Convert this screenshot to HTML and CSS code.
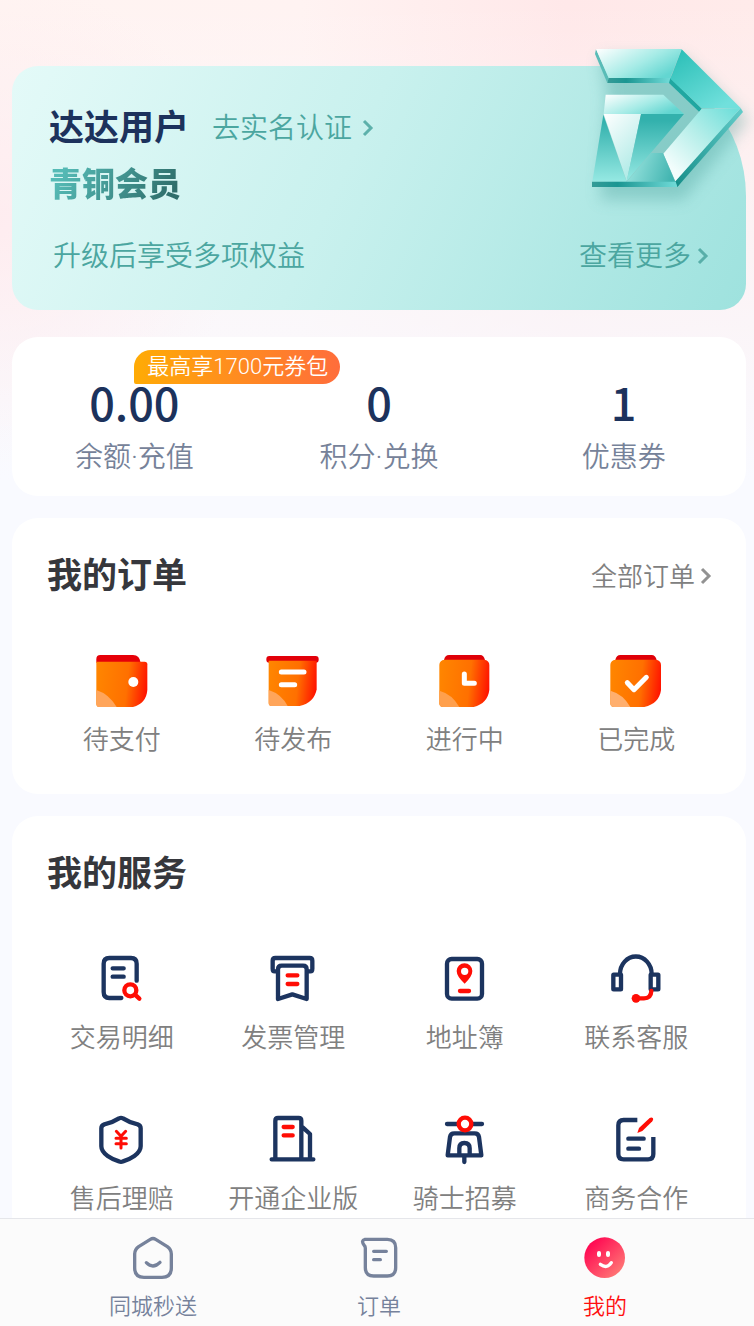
FILE: index.html
```html
<!DOCTYPE html>
<html lang="zh-CN">
<head>
    <meta charset="UTF-8">
    <meta name="viewport" content="width=device-width, initial-scale=1.0">
    <title>我的</title>
    <link rel="stylesheet" href="styles.css">
</head>
<body>
    <main>
        <section class="profile">
            <svg class="emblem" viewBox="0 0 582 570" aria-hidden="true">
                <defs>
                    <linearGradient id="e1" x1="0" y1="0" x2="1" y2="0.6"><stop offset="0" stop-color="#fff"/><stop offset="0.6" stop-color="#a5ebe6"/><stop offset="1" stop-color="#63d6d1"/></linearGradient>
                    <linearGradient id="e2" x1="0" y1="0" x2="0.7" y2="1"><stop offset="0" stop-color="#27bdb5"/><stop offset="1" stop-color="#71e0dc"/></linearGradient>
                    <linearGradient id="e3" x1="0.1" y1="0.8" x2="0.9" y2="0"><stop offset="0" stop-color="#f2fdfc"/><stop offset="0.5" stop-color="#b5eee9"/><stop offset="1" stop-color="#70dfda"/></linearGradient>
                    <linearGradient id="e4" x1="0" y1="0" x2="0" y2="1"><stop offset="0.1" stop-color="#33b1ad"/><stop offset="1" stop-color="#96e9e3"/></linearGradient>
                    <linearGradient id="e5" x1="0" y1="0" x2="1" y2="0"><stop offset="0" stop-color="#359b97"/><stop offset="0.3" stop-color="#1b9692"/><stop offset="1" stop-color="#71dbd8"/></linearGradient>
                    <linearGradient id="e6" x1="0" y1="0" x2="0.6" y2="1"><stop offset="0" stop-color="#fff"/><stop offset="1" stop-color="#aeeae6"/></linearGradient>
                    <linearGradient id="e7" x1="0" y1="0.4" x2="1" y2="0.6"><stop offset="0.1" stop-color="#92e0db"/><stop offset="1" stop-color="#3fb3af"/></linearGradient>
                    <linearGradient id="e8" x1="0" y1="1" x2="1" y2="0"><stop offset="0" stop-color="#168e89"/><stop offset="1" stop-color="#63cdca"/></linearGradient>
                    <filter id="soft" x="-20%" y="-20%" width="150%" height="150%"><feGaussianBlur stdDeviation="22"/></filter>
                </defs>
                <path d="M120 80H370L565 270L370 510H120L140 200Z" fill="#3f9993" opacity="0.34" filter="url(#soft)"/>
                <path d="M108 57L146 143L142 159L105 72Z" fill="#59bcb7"/>
                <path d="M146 143H331L328 159H142Z" fill="url(#e5)"/>
                <path d="M108 57H365L331 144H146Z" fill="url(#e1)"/>
                <path d="M331 144L425 236L418 246L327 159Z" fill="#20a7a1"/>
                <path d="M365 58L542 234H425L331 146Z" fill="url(#e2)"/>
                <path d="M542 234L549 246L352 471L346 454Z" fill="url(#e8)"/>
                <path d="M425 236L542 234L346 454L310 371Z" fill="url(#e3)"/>
                <path d="M346 454L352 471L361 458Z" fill="#168e89"/>
                <path d="M137 194H310L372 252H131Z" fill="url(#e1)"/>
                <path d="M130 254L200 455H97Z" fill="url(#e4)"/>
                <path d="M131 252H243L200 454Z" fill="url(#e6)"/>
                <path d="M243 252H372L200 454Z" fill="url(#e4)"/>
                <path d="M273 369H309L346 456H200Z" fill="url(#e7)"/>
                <path d="M96 455H347L352 471H96Z" fill="url(#e5)"/>
            </svg>
            <div class="name-row">
                <h1>达达用户</h1>
                <a href="#verify">去实名认证<svg class="chevron" viewBox="0 0 12 20" aria-hidden="true"><path d="M2 3L9 10L2 17"/></svg></a>
            </div>
            <p class="tier">青铜会员</p>
            <div class="benefits">
                <span>升级后享受多项权益</span>
                <a href="#benefits">查看更多<svg class="chevron" viewBox="0 0 12 20" aria-hidden="true"><path d="M2 3L9 10L2 17"/></svg></a>
            </div>
        </section>

        <section class="stats">
            <a href="#balance"><span class="coupon-tip">最高享1700元券包</span><strong>0.00</strong><span>余额·充值</span></a>
            <a href="#points"><strong>0</strong><span>积分·兑换</span></a>
            <a href="#coupons"><strong>1</strong><span>优惠券</span></a>
        </section>

        <section class="card">
            <div class="card-head">
                <h2>我的订单</h2>
                <a href="#orders">全部订单<svg class="chevron" viewBox="0 0 12 20" aria-hidden="true"><path d="M2 3L9 10L2 17"/></svg></a>
            </div>
            <div class="grid">
                <a href="#unpaid">
                    <svg viewBox="35 30 180 180" aria-hidden="true">
                        <defs><linearGradient id="orange" x1="0" y1="0.45" x2="1" y2="0.55"><stop offset="0" stop-color="#ff8500"/><stop offset="0.6" stop-color="#ff7000"/><stop offset="1" stop-color="#ff1200"/></linearGradient></defs>
                        <path d="M48 68V57Q48 45 60 45H158Q178 46 181 68Z" fill="#e60008"/>
                        <path d="M48 65H193Q201 65 201 73V150Q198 190 158 201H58Q48 201 48 191Z" fill="url(#orange)"/>
                        <path d="M48 150Q86 162 109 201H58Q48 201 48 191Z" fill="#ffa55a"/>
                        <circle cx="159" cy="126" r="15" fill="#fff"/>
                    </svg>
                    待支付
                </a>
                <a href="#unpublished">
                    <svg viewBox="550 30 180 180" aria-hidden="true">
                        <rect x="560" y="48" width="157" height="20" rx="9" fill="#e20009"/>
                        <path d="M567 62H711V148Q704 188 660 198H577Q567 198 567 188Z" fill="url(#orange)"/>
                        <path d="M567 150Q605 162 624 198H577Q567 198 567 188Z" fill="#ffa55a"/>
                        <path d="M605 96H673M605 134H645" fill="none" stroke="#fff" stroke-width="15" stroke-linecap="round"/>
                    </svg>
                    待发布
                </a>
                <a href="#ongoing">
                    <svg viewBox="44 30 180 180" aria-hidden="true">
                        <path d="M71 60Q74 45 86 45H180Q190 45 194 60Z" fill="#df0008"/>
                        <path d="M73 59H191Q207 61 207 75V150Q202 190 160 201H68Q57 201 57 190V75Q57 61 73 59Z" fill="url(#orange)"/>
                        <path d="M57 152Q95 162 117 201H68Q57 201 57 190Z" fill="#ffa04d"/>
                        <path d="M132 102V130H162" fill="none" stroke="#fff" stroke-width="15" stroke-linecap="round" stroke-linejoin="round"/>
                    </svg>
                    进行中
                </a>
                <a href="#finished">
                    <svg viewBox="557 30 180 180" aria-hidden="true">
                        <path d="M585 60Q588 45 600 45H694Q705 45 709 60Z" fill="#df0008"/>
                        <path d="M586 59H706Q722 61 722 75V150Q717 190 672 201H581Q570 201 570 190V75Q570 61 586 59Z" fill="url(#orange)"/>
                        <path d="M570 152Q608 162 630 201H581Q570 201 570 190Z" fill="#ffaf6e"/>
                        <path d="M621 128L641 149L678 112" fill="none" stroke="#fff" stroke-width="15" stroke-linecap="round" stroke-linejoin="round"/>
                    </svg>
                    已完成
                </a>
            </div>
        </section>

        <section class="card">
            <div class="card-head">
                <h2>我的服务</h2>
            </div>
            <div class="grid line-icons">
                <a href="#transactions">
                    <svg viewBox="97 24 180 180" aria-hidden="true">
                        <path d="M231 122V71Q231 54 214 54H149Q132 54 132 71V156Q132 174 149 174H185M159 85H192M159 110H192"/>
                        <g class="red"><circle cx="212" cy="151" r="18"/><path d="M226 164L239 176"/></g>
                    </svg>
                    交易明细
                </a>
                <a href="#invoices">
                    <svg viewBox="610 24 180 180" aria-hidden="true">
                        <path d="M654 94H645Q639 94 639 86V62Q639 54 647 54H750Q758 54 758 62V86Q758 94 752 94H744"/>
                        <path d="M655 177V88Q655 77 666 77H730Q741 77 741 88V177L698 163Z"/>
                        <path class="red" d="M684 106H713M684 132H713"/>
                    </svg>
                    发票管理
                </a>
                <a href="#addresses">
                    <svg viewBox="74 24 180 180" aria-hidden="true">
                        <rect x="110" y="57" width="105" height="119" rx="14"/>
                        <path class="red-fill" fill-rule="evenodd" d="M163 131Q139 109 139 93A23.500 23.500 0 0 1 186 93Q186 109 163 131ZM163 83A11 11 0 1 0 163 105A11 11 0 1 0 163 83Z"/>
                        <path class="red" d="M149 153H176"/>
                    </svg>
                    地址簿
                </a>
                <a href="#support">
                    <svg viewBox="587 24 180 180" aria-hidden="true">
                        <path d="M629 102A47 52 0 0 1 724 102"/>
                        <rect x="609" y="104" width="23" height="44" rx="1"/><rect x="721" y="104" width="23" height="44" rx="1"/>
                        <path class="red" d="M723 153Q722 175 701 175H680"/><circle class="red-fill" cx="677" cy="175" r="13"/>
                    </svg>
                    联系客服
                </a>
                <a href="#claims">
                    <svg viewBox="97 12 180 180" aria-hidden="true">
                        <path d="M178 40Q184 37 190 40Q210 53 234 58Q243 61 243 70V124C243 147 210 163 190 169Q184 172 178 169C158 163 125 147 125 124V70Q125 61 134 58Q158 53 178 40Z"/>
                        <path class="red thin" d="M170 79L184 94L198 79M169 100H200M169 116H200M184 94V129"/>
                    </svg>
                    售后理赔
                </a>
                <a href="#enterprise">
                    <svg viewBox="610 12 180 180" aria-hidden="true">
                        <path d="M636 163H761M647 162V47Q647 39 655 39H717Q725 39 725 47V162M730 68L751 87V162"/>
                        <path class="red" d="M672 66H699M672 91H699"/>
                    </svg>
                    开通企业版
                </a>
                <a href="#riders">
                    <svg viewBox="74 12 180 180" aria-hidden="true">
                        <path d="M110 57H215M112 151L119 96Q121 85 132 85H193Q204 85 206 96L213 151ZM147 150V130Q147 114 162 114Q178 114 178 130V150M162 154V171"/>
                        <circle class="red white-fill" cx="164" cy="57" r="19"/>
                    </svg>
                    骑士招募
                </a>
                <a href="#business">
                    <svg viewBox="587 12 180 180" aria-hidden="true">
                        <path class="butt" d="M681 45H640Q624 45 624 61V147Q624 163 640 163H713Q729 163 729 147V96"/><path d="M654 101H700M654 131H686"/>
                        <path class="red-fill" d="M681 84L686 69L718 39Q724 35 728 40Q730 45 726 49L696 78Z"/>
                    </svg>
                    商务合作
                </a>
            </div>
        </section>
    </main>

    <nav class="tabs">
        <a href="#home">
            <svg viewBox="117 57 144 144" aria-hidden="true"><path d="M181 73Q189 68 197 73L232 95Q244 104 244 117V159Q244 187 216 187H162Q134 187 134 159V117Q134 104 146 95Z"/><path d="M169 143Q189 163 210 142"/></svg>
            同城秒送
        </a>
        <a href="#order-list">
            <svg viewBox="795 57 144 144" aria-hidden="true"><path d="M825 73H892Q917 73 917 98V158Q917 183 892 183H851Q826 183 826 158V99Q826 94 822 90Q812 76 825 73ZM851 109H889M851 134H871"/></svg>
            订单
        </a>
        <a href="#me" class="active">
            <svg viewBox="63 57 144 144" aria-hidden="true">
                <defs><linearGradient id="face" x1="0.1" y1="0.1" x2="0.9" y2="0.9"><stop offset="0" stop-color="#ff0150"/><stop offset="1" stop-color="#ff7a76"/></linearGradient></defs>
                <circle cx="134" cy="128" r="61" fill="url(#face)"/>
                <path d="M117 114V120M144 114V120" stroke-width="12"/><path d="M121 148Q141 163 154 143"/>
            </svg>
            我的
        </a>
    </nav>
</body>
</html>
```

FILE: styles.css
```css
* {
    box-sizing: border-box;
}

body {
    margin: 0;
    height: 100vh;
    display: flex;
    flex-direction: column;
    font-family: Roboto, "Noto Sans CJK SC", sans-serif;
    font-weight: 350;
    background:
        radial-gradient(circle at 0 220px, rgba(255, 232, 236, 0.7), rgba(255, 232, 236, 0) 240px),
        linear-gradient(180deg, rgba(249, 250, 255, 0) 0, #f9faff 480px),
        linear-gradient(90deg, #fff4f2 0%, #fff3f2 40%, #ffe8e9 75%, #ffebea 100%);
    color: #808080;
}

a {
    color: inherit;
    text-decoration: none;
}

h1, h2, p {
    margin: 0;
}

main {
    flex: 1;
    min-height: 0;
    overflow-y: auto;
    scrollbar-width: none;
    padding: 66px 8px 24px 12px;
}

.chevron {
    width: 12px;
    height: 20px;
    margin-bottom: 2px;
    fill: none;
    stroke: currentColor;
    stroke-width: 3;
    opacity: 0.85;
}

/* member card */
.profile {
    position: relative;
    padding: 39px 37px 33px 37px;
    border-radius: 26px 120px 26px 26px / 26px 130px 26px 26px;
    background: linear-gradient(115deg, #e4faf8 0%, #c9f1ee 45%, #9ee2de 100%);
    color: #4ba6a0;
    font-size: 28px;
    line-height: 40px;
}

.emblem {
    position: absolute;
    top: -36px;
    right: -8px;
    width: 194px;
    height: 190px;
}

.name-row {
    display: flex;
    align-items: center;
    gap: 23px;
}

.name-row h1 {
    font-size: 35px;
    line-height: 48px;
    font-weight: 700;
    color: #1c325c;
}

.name-row a {
    display: flex;
    align-items: center;
    gap: 10px;
}

.tier {
    width: max-content;
    margin-top: 12px;
    font-size: 33px;
    font-weight: 900;
    background: linear-gradient(120deg, #55bbb6 10%, #2f6e6b 90%);
    background-clip: text;
    -webkit-background-clip: text;
    color: transparent;
}

.benefits {
    display: flex;
    justify-content: space-between;
    margin-top: 32px;
    padding-left: 4px;
}

.benefits a {
    display: flex;
    align-items: center;
    gap: 6px;
}

/* balance, points, coupons */
.stats {
    display: grid;
    grid-template-columns: repeat(3, 1fr);
    margin-top: 27px;
    padding: 41px 0 18px;
    border-radius: 26px;
    background: #fff;
    color: #768299;
    font-size: 28px;
    line-height: 40px;
}

.stats a {
    position: relative;
    display: flex;
    flex-direction: column;
    align-items: center;
    gap: 12px;
}

.stats strong {
    font-family: "Noto Sans CJK SC", sans-serif;
    font-size: 45px;
    line-height: 48px;
    font-weight: 500;
    color: #1c325c;
}

.coupon-tip {
    position: absolute;
    top: -28px;
    left: 50%;
    padding: 0 12px 0 13px;
    border-radius: 17px 17px 17px 2px;
    background: linear-gradient(90deg, #ffab05, #ff6d3b);
    color: #fff;
    font-size: 22px;
    line-height: 34px;
    white-space: nowrap;
}

/* orders and services */
.card {
    margin-top: 22px;
    padding: 35px 24px 36px;
    border-radius: 26px;
    background: #fff;
    font-size: 26px;
    line-height: 36px;
}

.card-head {
    display: flex;
    justify-content: space-between;
    align-items: center;
    padding: 0 10px 0 11px;
    margin-bottom: 49px;
}

.card-head h2 {
    font-size: 35px;
    line-height: 48px;
    font-weight: 700;
    color: #36373c;
}

.card-head a {
    display: flex;
    align-items: center;
    gap: 5px;
}

.grid {
    display: grid;
    grid-template-columns: repeat(4, 1fr);
    row-gap: 53px;
}

.grid a {
    display: flex;
    flex-direction: column;
    align-items: center;
    gap: 12px;
    white-space: nowrap;
}

.grid svg {
    width: 60px;
    height: 60px;
}

.line-icons svg {
    fill: none;
    stroke: #1c345f;
    stroke-width: 13;
    stroke-linecap: round;
    stroke-linejoin: round;
}

.line-icons .red {
    stroke: #ff0d05;
}

.line-icons .red-fill {
    fill: #ff0d05;
    stroke: none;
}

.line-icons .white-fill {
    fill: #fff;
}

.line-icons .thin {
    stroke-width: 9;
}

.line-icons .butt {
    stroke-linecap: butt;
}

/* bottom bar */
.tabs {
    display: grid;
    grid-template-columns: repeat(3, 1fr);
    padding: 15px 36px 3px 40px;
    border-top: 1px solid #e5e6ea;
    background: #fbfbfb;
    color: #76829b;
    font-size: 22px;
    line-height: 32px;
}

.tabs a {
    display: flex;
    flex-direction: column;
    align-items: center;
    gap: 9px;
}

.tabs svg {
    width: 48px;
    height: 48px;
    fill: none;
    stroke: currentColor;
    stroke-width: 10;
    stroke-linecap: round;
    stroke-linejoin: round;
}

.tabs .active {
    color: #ff0f0f;
}

.tabs .active svg path {
    stroke: #fff;
}

.tabs .active circle {
    stroke: none;
}
```
